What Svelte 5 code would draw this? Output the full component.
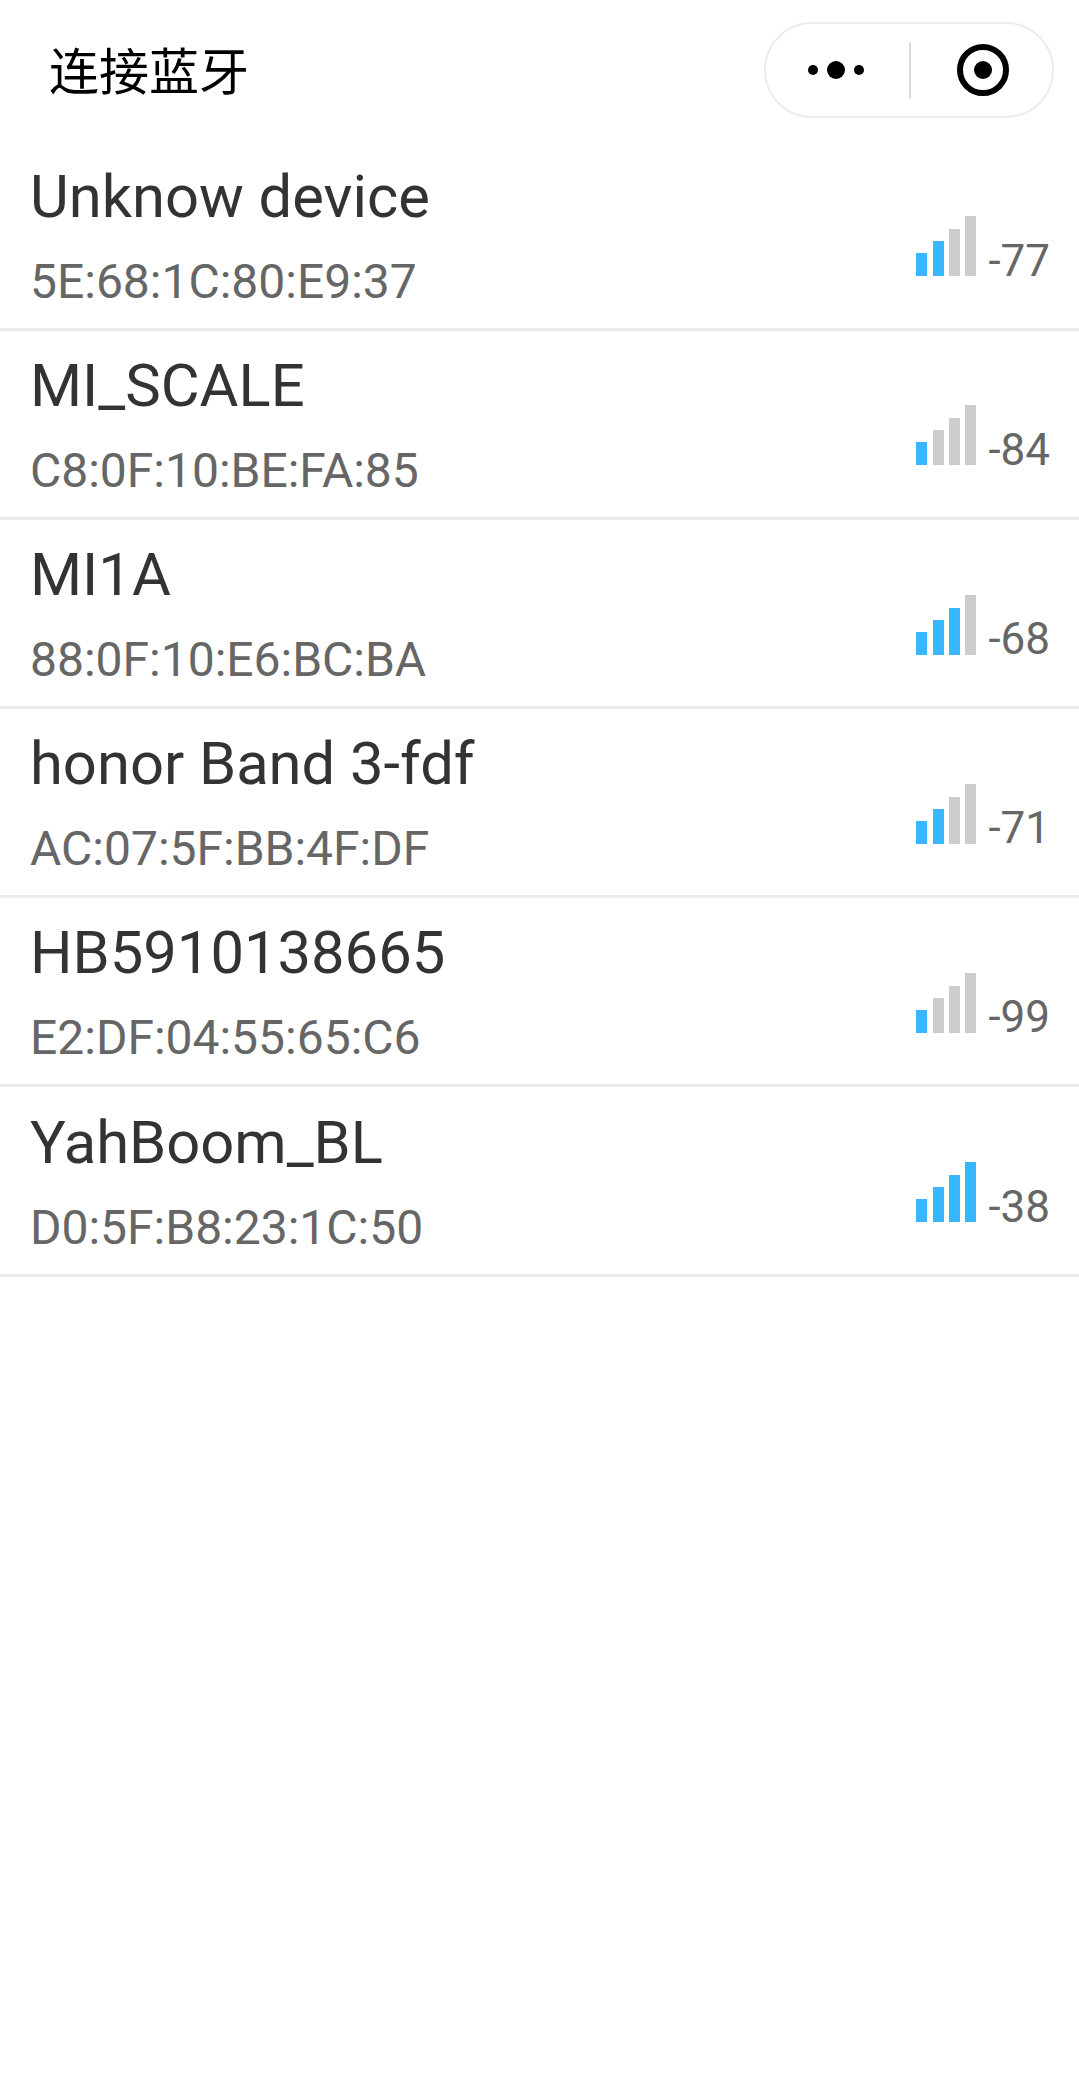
<script>
	const devices = [
		{ name: 'Unknow device', mac: '5E:68:1C:80:E9:37', rssi: -77, level: 2 },
		{ name: 'MI_SCALE', mac: 'C8:0F:10:BE:FA:85', rssi: -84, level: 1 },
		{ name: 'MI1A', mac: '88:0F:10:E6:BC:BA', rssi: -68, level: 3 },
		{ name: 'honor Band 3-fdf', mac: 'AC:07:5F:BB:4F:DF', rssi: -71, level: 2 },
		{ name: 'HB5910138665', mac: 'E2:DF:04:55:65:C6', rssi: -99, level: 1 },
		{ name: 'YahBoom_BL', mac: 'D0:5F:B8:23:1C:50', rssi: -38, level: 4 }
	];
	const bars = [1, 2, 3, 4];
</script>

<div class="page">
	<header class="nav">
		<h1>连接蓝牙</h1>
		<div class="capsule">
			<div class="more" aria-label="More">
				<span class="dot"></span>
				<span class="dot big"></span>
				<span class="dot"></span>
			</div>
			<div class="divider"></div>
			<div class="close" aria-label="Close"><span></span></div>
		</div>
	</header>

	<ul class="list">
		{#each devices as device}
			<li class="row">
				<div class="info">
					<div class="name">{device.name}</div>
					<div class="mac">{device.mac}</div>
				</div>
				<div class="signal">
					<div class="bars">
						{#each bars as bar}
							<span class="bar b{bar}" class:on={bar <= device.level}></span>
						{/each}
					</div>
					<span class="rssi">{device.rssi}</span>
				</div>
			</li>
		{/each}
	</ul>
</div>

<style>
	:global(body) {
		background: #fff;
	}

	.page {
		height: 2089px;
		background: #fff;
		font-family: Roboto, 'Noto Sans', sans-serif;
		overflow: hidden;
	}

	.nav {
		height: 141.5px;
		display: flex;
		align-items: flex-start;
		justify-content: space-between;
		padding: 22px 25px 0 49px;
		box-sizing: border-box;
	}

	h1 {
		margin: 0;
		font-family: 'Noto Sans CJK SC', sans-serif;
		font-size: 50px;
		line-height: 92px;
		font-weight: 400;
		color: #000;
	}

	.capsule {
		width: 290px;
		height: 96px;
		box-sizing: border-box;
		border: 2px solid #ececec;
		border-radius: 48px;
		display: flex;
		align-items: center;
	}

	.more {
		width: 143px;
		display: flex;
		align-items: center;
		justify-content: center;
		gap: 9px;
		padding-right: 3px;
		box-sizing: border-box;
	}

	.dot {
		width: 10px;
		height: 10px;
		border-radius: 50%;
		background: #000;
	}

	.dot.big {
		width: 18px;
		height: 18px;
	}

	.divider {
		width: 2px;
		height: 57px;
		background: #dcdcdc;
	}

	.close {
		flex: 1;
		display: flex;
		align-items: center;
		justify-content: center;
		padding-left: 3px;
	}

	.close span {
		width: 52px;
		height: 52px;
		box-sizing: border-box;
		border: 6px solid #000;
		border-radius: 50%;
		display: flex;
		align-items: center;
		justify-content: center;
	}

	.close span::after {
		content: '';
		width: 18px;
		height: 18px;
		border-radius: 50%;
		background: #000;
	}

	.list {
		margin: 0;
		padding: 0;
		list-style: none;
	}

	.row {
		height: 189.2px;
		box-sizing: border-box;
		border-bottom: 3px solid #ececec;
		padding: 0 29px 0 30px;
		display: flex;
		justify-content: space-between;
		align-items: flex-end;
	}

	.name {
		font-size: 59.7px;
		line-height: 68px;
		color: #333;
	}

	.mac {
		margin-top: 23px;
		margin-bottom: 18px;
		font-size: 48px;
		line-height: 56px;
		color: #666;
	}

	.signal {
		display: flex;
		align-items: flex-end;
		gap: 12px;
		margin-bottom: 45px;
	}

	.bars {
		display: flex;
		align-items: flex-end;
		gap: 5.3px;
		margin-bottom: 6.5px;
	}

	.bar {
		width: 11px;
		background: #ccc;
	}

	.bar.on {
		background: #38b6ff;
	}

	.b1 { height: 23px; }
	.b2 { height: 35px; }
	.b3 { height: 47px; }
	.b4 { height: 60px; }

	.rssi {
		font-size: 44px;
		line-height: 44px;
		color: #666;
	}
</style>
